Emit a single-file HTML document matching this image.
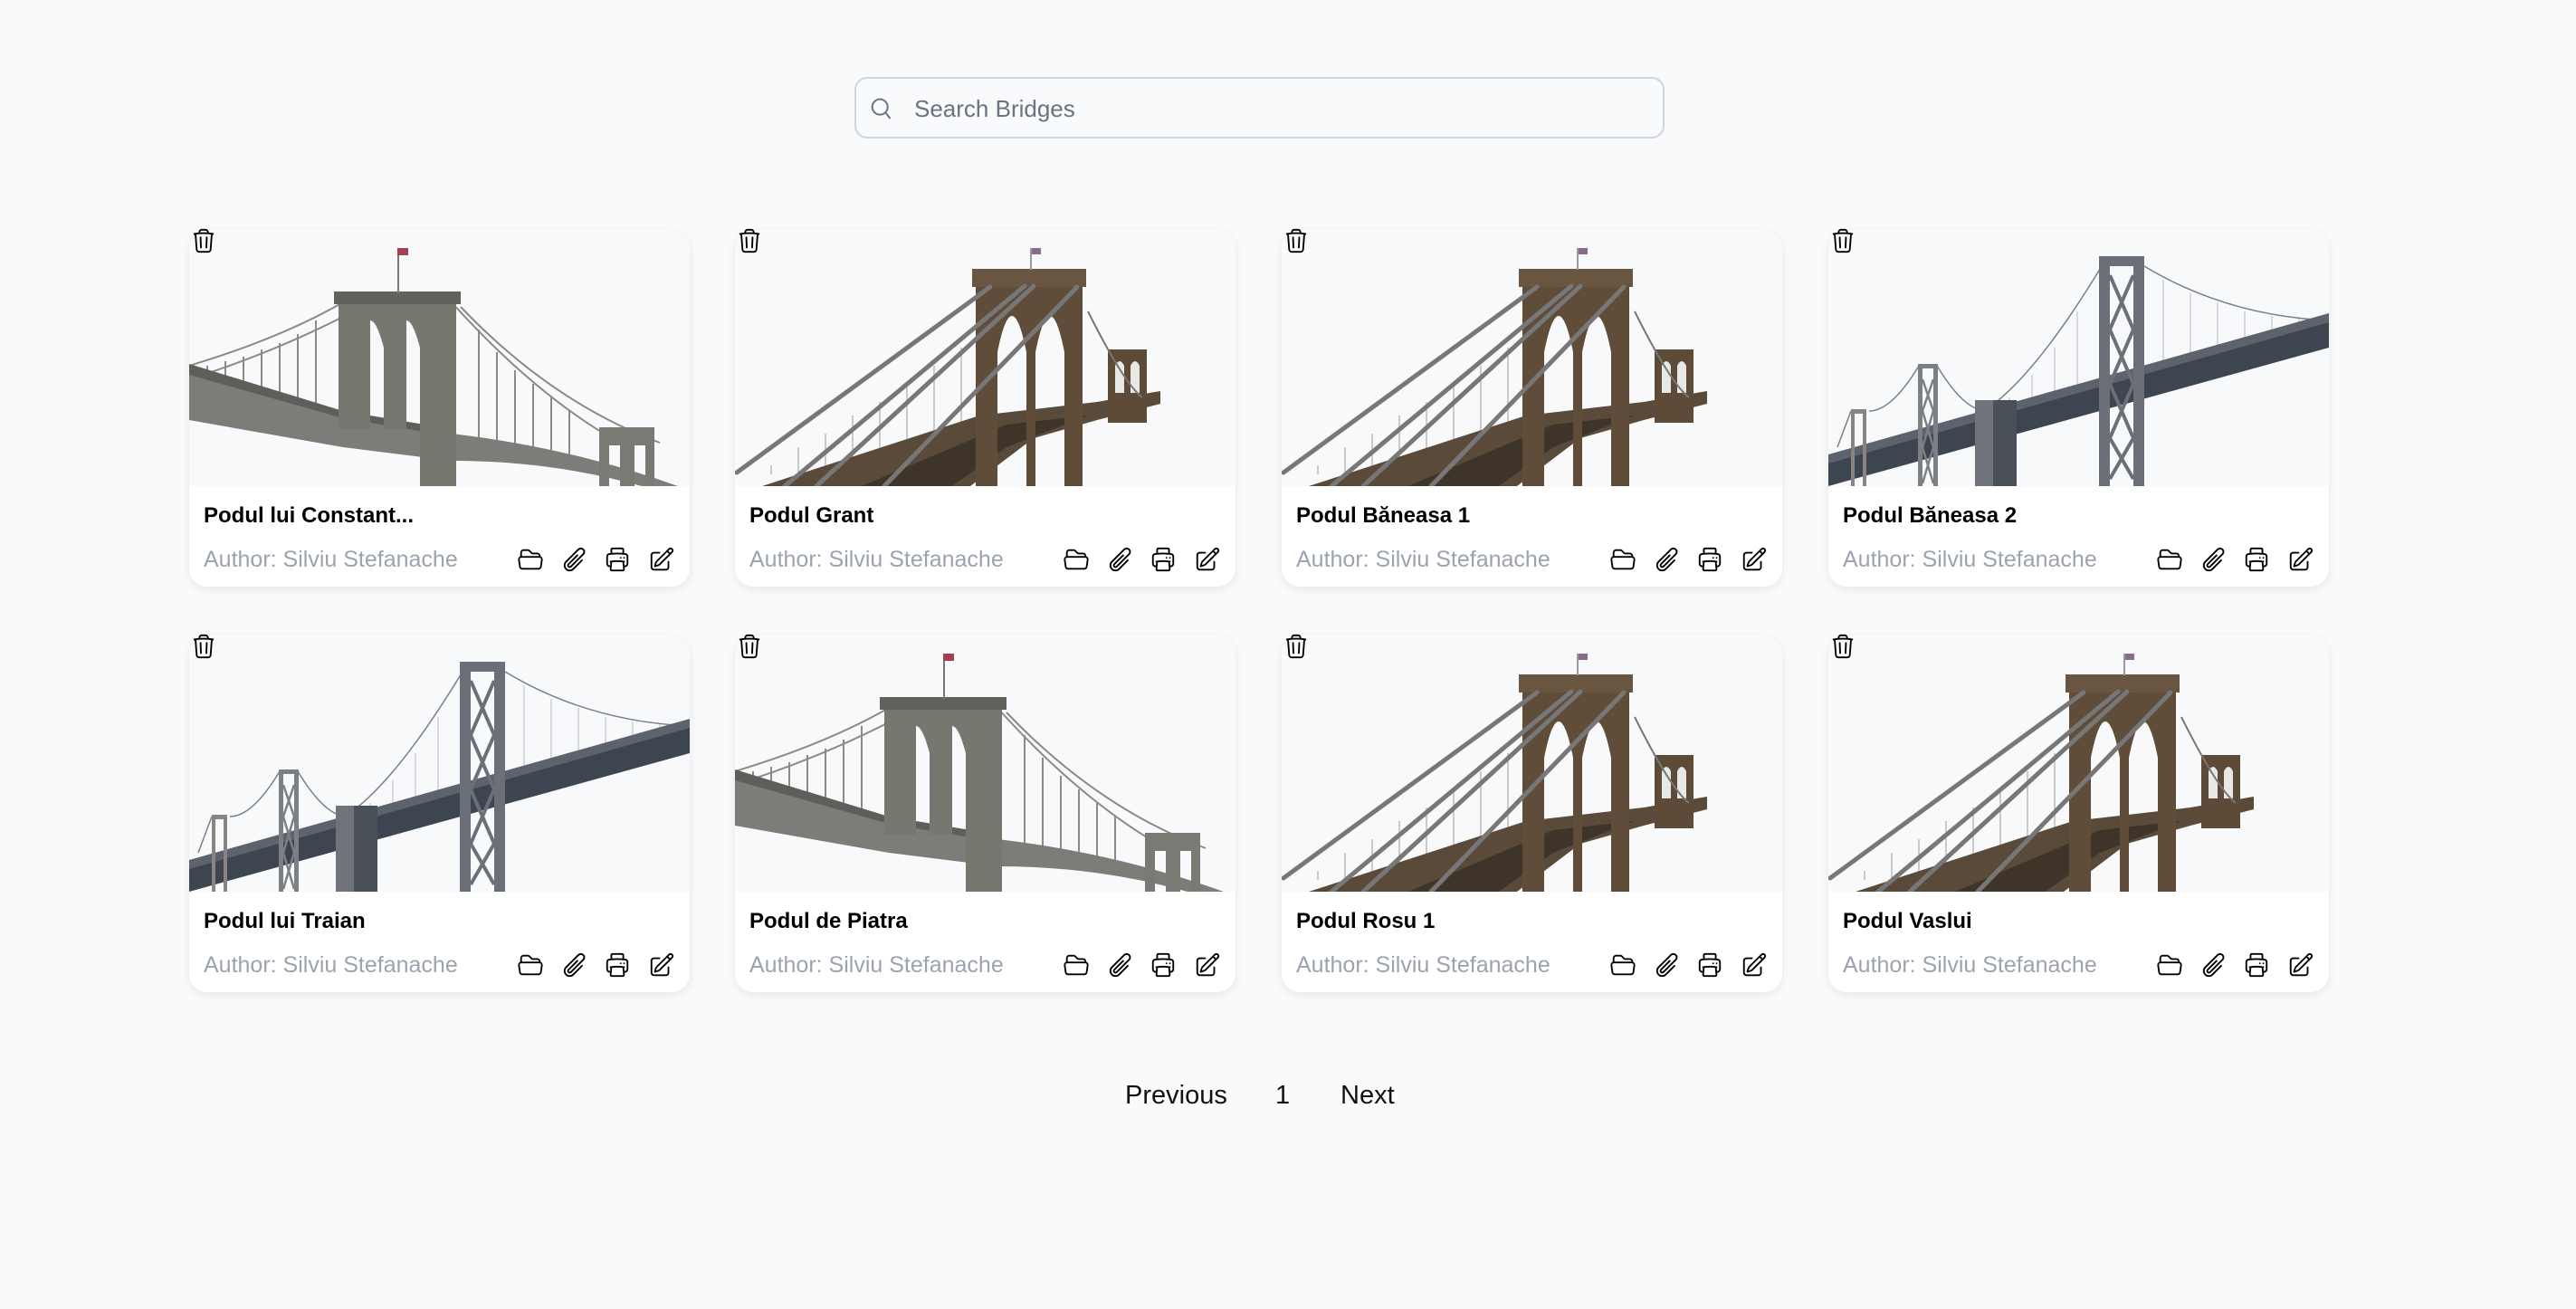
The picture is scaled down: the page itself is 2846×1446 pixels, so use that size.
<!DOCTYPE html>
<html><head><meta charset="utf-8"><style>
*{margin:0;padding:0;box-sizing:border-box}
body{width:2846px;height:1446px;background:#f9fafb;font-family:"Liberation Sans",sans-serif;position:relative;overflow:hidden}
.search{position:absolute;left:944px;top:85px;width:895px;height:68px;border:2px solid #d1d5db;border-radius:14px;background:#f9fafb}
.search span{position:absolute;left:64px;top:18px;font-size:26px;color:#6b7280}
.search svg{position:absolute;left:12px;top:17px}
.card{position:absolute;width:553px;height:394px;background:#fff;border-radius:20px;box-shadow:0 3px 10px rgba(0,0,0,.08)}
.card .img{position:absolute;left:0;top:0;width:553px;height:283px;border-radius:20px 20px 0 0;overflow:hidden;background:#f8f9fa}
.card .t{position:absolute;left:16px;top:302px;font-size:24px;font-weight:bold;color:#000}
.card .a{position:absolute;left:16px;top:350px;font-size:25px;color:#9ca3af}
.card .tr{position:absolute;left:1px;top:-3px}
.ic{position:absolute;top:349px}
.pg{position:absolute;top:1194px;font-size:29px;color:#111}
</style></head><body>
<svg width="0" height="0" style="position:absolute">
<defs>
<symbol id="trash" viewBox="0 0 24 24"><path fill="none" stroke="#000" stroke-width="1.5" stroke-linecap="round" stroke-linejoin="round" d="m14.74 9-.346 9m-4.788 0L9.26 9m9.968-3.21c.342.052.682.107 1.022.166m-1.022-.165L18.16 19.673a2.25 2.25 0 0 1-2.244 2.077H8.084a2.25 2.25 0 0 1-2.244-2.077L4.772 5.79m14.456 0a48.108 48.108 0 0 0-3.478-.397m-12 .562c.34-.059.68-.114 1.022-.165m0 0a48.11 48.11 0 0 1 3.478-.397m7.5 0v-.916c0-1.180-.91-2.164-2.09-2.201a51.964 51.964 0 0 0-3.32 0c-1.18.037-2.09 1.022-2.09 2.201v.916m7.5 0a48.667 48.667 0 0 0-7.5 0"/></symbol>
<symbol id="folder" viewBox="0 0 24 24"><path fill="none" stroke="#000" stroke-width="1.5" stroke-linecap="round" stroke-linejoin="round" d="M3.75 9.776c.112-.017.227-.026.344-.026h15.812c.117 0 .232.009.344.026m-16.5 0a2.25 2.25 0 0 0-1.883 2.542l.857 6a2.25 2.25 0 0 0 2.227 1.932H19.05a2.25 2.25 0 0 0 2.227-1.932l.857-6a2.25 2.25 0 0 0-1.883-2.542m-16.5 0V6A2.25 2.25 0 0 1 6 3.75h3.879a1.5 1.5 0 0 1 1.06.44l2.122 2.12a1.5 1.5 0 0 0 1.06.44H18A2.25 2.25 0 0 1 20.25 9v.776"/></symbol>
<symbol id="clip" viewBox="0 0 24 24"><path fill="none" stroke="#000" stroke-width="1.5" stroke-linecap="round" stroke-linejoin="round" d="m18.375 12.739-7.693 7.693a4.5 4.5 0 0 1-6.364-6.364l10.94-10.94A3 3 0 1 1 19.5 7.372L8.552 18.32m.009-.01-.01.01m5.699-9.941-7.81 7.81a1.5 1.5 0 0 0 2.112 2.13"/></symbol>
<symbol id="print" viewBox="0 0 24 24"><path fill="none" stroke="#000" stroke-width="1.5" stroke-linecap="round" stroke-linejoin="round" d="M6.72 13.829c-.24.03-.48.062-.72.096m.72-.096a42.415 42.415 0 0 1 10.56 0m-10.56 0L6.34 18m10.94-4.171c.24.03.48.062.72.096m-.72-.096L17.66 18m0 0 .229 2.523a1.125 1.125 0 0 1-1.12 1.227H7.231c-.662 0-1.18-.568-1.12-1.227L6.34 18m11.318 0h1.091A2.25 2.25 0 0 0 21 15.750V9.456c0-1.081-.768-2.015-1.837-2.175a48.055 48.055 0 0 0-1.913-.247M6.34 18H5.25A2.25 2.25 0 0 1 3 15.75V9.456c0-1.081.768-2.015 1.837-2.175a48.041 48.041 0 0 1 1.913-.247m10.5 0a48.536 48.536 0 0 0-10.5 0m10.5 0V3.375c0-.621-.504-1.125-1.125-1.125h-8.25c-.621 0-1.125.504-1.125 1.125v3.659M18 10.5h.008v.008H18V10.5Zm-3 0h.008v.008H15V10.5Z"/></symbol>
<symbol id="edit" viewBox="0 0 24 24"><path fill="none" stroke="#000" stroke-width="1.5" stroke-linecap="round" stroke-linejoin="round" d="m16.862 4.487 1.687-1.688a1.875 1.875 0 1 1 2.652 2.652L10.582 16.07a4.5 4.5 0 0 1-1.897 1.13L6 18l.8-2.685a4.5 4.5 0 0 1 1.13-1.897l8.932-8.931Zm0 0L19.5 7.125M18 14v4.75A2.25 2.25 0 0 1 15.75 21H5.25A2.25 2.25 0 0 1 3 18.75V8.25A2.25 2.25 0 0 1 5.25 6H10"/></symbol>

<symbol id="bw" viewBox="0 0 553 283" preserveAspectRatio="none">
<g stroke="#8a8a86" fill="none" stroke-width="2">
<path d="M0 150 Q100 120 170 80"/><path d="M0 165 Q110 130 200 80"/><path d="M290 80 Q380 180 470 232"/><path d="M300 85 Q400 190 520 235"/>
<path d="M20 150V200M40 145V205M60 140V205M80 132V210M100 125V212M120 115V215M140 100V218M320 110V240M340 135V245M360 155V250M380 170V255M400 185V258M420 200V262"/>
</g>
<path d="M0 150 L170 205 L290 225 Q420 240 540 283 L500 283 Q400 255 290 255 L170 240 L0 210Z" fill="#7c7c78"/>
<path d="M0 148 L170 200 L290 220 L290 228 L170 208 L0 160Z" fill="#5e5e5a"/>
<path d="M165 78h130v205h-40V130q-8-30-15-30v120h-25V130q-8-30-15-30v120h-35z" fill="#77776f"/>
<path d="M160 68h140v14H160z" fill="#62625d"/>
<path d="M230 20h2v50h-2z" fill="#777"/><path d="M230 20h12v8h-12z" fill="#a04050"/>
<path d="M453 218h61v65h-10v-45h-12v45h-16v-45h-12v45h-11z" fill="#7a7a75"/>
</symbol>

<symbol id="bc" viewBox="0 0 553 283" preserveAspectRatio="none">
<g stroke="#9a9a9a" fill="none" stroke-width="1">
<path d="M40 270V260M70 283V240M100 283V225M130 283V205M160 283V190M190 283V170M220 283V150M250 283V130"/>
</g>
<path d="M30 283 L270 205 L400 190 L470 178 L470 192 L400 210 L330 230 L260 283Z" fill="#5a4a3a"/>
<path d="M140 283 L300 215 L390 205 L300 240 L240 283Z" fill="#3e342a"/>
<path d="M266 55h118v228h-20V135q-8-40-16-40t-16 40v150h-10V135q-8-40-16-40t-16 40v150h-24z" fill="#5f4c39"/>
<path d="M262 43h126v20H262z" fill="#6a5540"/>
<path d="M326 20h2v24h-2z" fill="#999"/><path d="M328 20h10v7h-10z" fill="#8a6a8a"/>
<path d="M412 132h43v81h-43z" fill="#5d4a37"/>
<path d="M420 150q5-10 10 0v30h-10zM437 150q5-10 10 0v30h-10z" fill="#e8e8e6"/>
<g stroke="#777" fill="none" stroke-width="5" stroke-linecap="round">
<path d="M282 63 L2 268"/><path d="M320 62 L55 283"/><path d="M330 62 L90 283"/><path d="M378 63 L165 283"/>
</g>
<path d="M390 90 Q430 170 450 185" stroke="#777" stroke-width="2" fill="none"/>
</symbol>

<symbol id="bb" viewBox="0 0 553 283" preserveAspectRatio="none">
<g stroke="#7a7f86" fill="none" stroke-width="1.5">
<path d="M305 35 Q230 160 175 198"/><path d="M349 40 Q440 95 553 100"/>
<path d="M120 150 Q150 200 175 200"/><path d="M100 150 Q70 200 45 200"/><path d="M25 200 L10 240"/>
</g>
<g stroke="#aab" stroke-width=".8"><path d="M200 185V220M225 160V210M250 130V200M275 90V195M370 55V165M400 70V155M430 80V145M460 90V135M490 95V125M520 98V115"/></g>
<path d="M0 252 L553 94 L553 130 L0 283Z" fill="#3d4550"/>
<path d="M0 248 L553 92 L553 102 L0 258Z" fill="#5c636c"/>
<path d="M299 29h50v254h-12V40h-26v243h-12z" fill="#6b7078"/>
<path d="M311 50 L337 110 M337 50 L311 110 M311 110 L337 170 M337 110 L311 170 M311 170 L337 230 M337 170 L311 230 M311 230 L337 275 M337 230 L311 275" stroke="#6b7078" stroke-width="4"/>
<path d="M99 148h22v135h-5V153h-12v130h-5z" fill="#7c7f84"/>
<path d="M104 165 L116 200 M116 165 L104 200 M104 200 L116 240 M116 200 L104 240 M104 240 L116 280 M116 240 L104 280" stroke="#7c7f84" stroke-width="2.5"/>
<path d="M25 198h17v85h-4v-80h-9v80h-4z" fill="#8a8480"/>
<path d="M162 188h46v95h-46z" fill="#4a5058"/><path d="M162 188h20v95h-20z" fill="#70747a"/>
</symbol>
</defs></svg>

<div class="search"><svg width="34" height="34" viewBox="0 0 24 24"><circle cx="10" cy="10" r="6" fill="none" stroke="#6b7280" stroke-width="1.4"/><path d="M14.5 14.5 18 19" stroke="#6b7280" stroke-width="1.4"/></svg><span>Search Bridges</span></div>

<div class="card" style="left:209px;top:254px"><div class="img"><svg width="553" height="283"><use href="#bw"/></svg></div><svg class="tr" width="30" height="30"><use href="#trash"/></svg><div class="t">Podul lui Constant...</div><div class="a">Author: Silviu Stefanache</div><svg class="ic" style="left:362px" width="30" height="30"><use href="#folder"/></svg><svg class="ic" style="left:411px" width="30" height="30"><use href="#clip"/></svg><svg class="ic" style="left:458px" width="30" height="30"><use href="#print"/></svg><svg class="ic" style="left:507px" width="30" height="30"><use href="#edit"/></svg></div>

<div class="card" style="left:812px;top:254px"><div class="img"><svg width="553" height="283"><use href="#bc"/></svg></div><svg class="tr" width="30" height="30"><use href="#trash"/></svg><div class="t">Podul Grant</div><div class="a">Author: Silviu Stefanache</div><svg class="ic" style="left:362px" width="30" height="30"><use href="#folder"/></svg><svg class="ic" style="left:411px" width="30" height="30"><use href="#clip"/></svg><svg class="ic" style="left:458px" width="30" height="30"><use href="#print"/></svg><svg class="ic" style="left:507px" width="30" height="30"><use href="#edit"/></svg></div>

<div class="card" style="left:1416px;top:254px"><div class="img"><svg width="553" height="283"><use href="#bc"/></svg></div><svg class="tr" width="30" height="30"><use href="#trash"/></svg><div class="t">Podul Băneasa 1</div><div class="a">Author: Silviu Stefanache</div><svg class="ic" style="left:362px" width="30" height="30"><use href="#folder"/></svg><svg class="ic" style="left:411px" width="30" height="30"><use href="#clip"/></svg><svg class="ic" style="left:458px" width="30" height="30"><use href="#print"/></svg><svg class="ic" style="left:507px" width="30" height="30"><use href="#edit"/></svg></div>

<div class="card" style="left:2020px;top:254px"><div class="img"><svg width="553" height="283"><use href="#bb"/></svg></div><svg class="tr" width="30" height="30"><use href="#trash"/></svg><div class="t">Podul Băneasa 2</div><div class="a">Author: Silviu Stefanache</div><svg class="ic" style="left:362px" width="30" height="30"><use href="#folder"/></svg><svg class="ic" style="left:411px" width="30" height="30"><use href="#clip"/></svg><svg class="ic" style="left:458px" width="30" height="30"><use href="#print"/></svg><svg class="ic" style="left:507px" width="30" height="30"><use href="#edit"/></svg></div>

<div class="card" style="left:209px;top:702px"><div class="img"><svg width="553" height="283"><use href="#bb"/></svg></div><svg class="tr" width="30" height="30"><use href="#trash"/></svg><div class="t">Podul lui Traian</div><div class="a">Author: Silviu Stefanache</div><svg class="ic" style="left:362px" width="30" height="30"><use href="#folder"/></svg><svg class="ic" style="left:411px" width="30" height="30"><use href="#clip"/></svg><svg class="ic" style="left:458px" width="30" height="30"><use href="#print"/></svg><svg class="ic" style="left:507px" width="30" height="30"><use href="#edit"/></svg></div>

<div class="card" style="left:812px;top:702px"><div class="img"><svg width="553" height="283"><use href="#bw"/></svg></div><svg class="tr" width="30" height="30"><use href="#trash"/></svg><div class="t">Podul de Piatra</div><div class="a">Author: Silviu Stefanache</div><svg class="ic" style="left:362px" width="30" height="30"><use href="#folder"/></svg><svg class="ic" style="left:411px" width="30" height="30"><use href="#clip"/></svg><svg class="ic" style="left:458px" width="30" height="30"><use href="#print"/></svg><svg class="ic" style="left:507px" width="30" height="30"><use href="#edit"/></svg></div>

<div class="card" style="left:1416px;top:702px"><div class="img"><svg width="553" height="283"><use href="#bc"/></svg></div><svg class="tr" width="30" height="30"><use href="#trash"/></svg><div class="t">Podul Rosu 1</div><div class="a">Author: Silviu Stefanache</div><svg class="ic" style="left:362px" width="30" height="30"><use href="#folder"/></svg><svg class="ic" style="left:411px" width="30" height="30"><use href="#clip"/></svg><svg class="ic" style="left:458px" width="30" height="30"><use href="#print"/></svg><svg class="ic" style="left:507px" width="30" height="30"><use href="#edit"/></svg></div>

<div class="card" style="left:2020px;top:702px"><div class="img"><svg width="553" height="283"><use href="#bc"/></svg></div><svg class="tr" width="30" height="30"><use href="#trash"/></svg><div class="t">Podul Vaslui</div><div class="a">Author: Silviu Stefanache</div><svg class="ic" style="left:362px" width="30" height="30"><use href="#folder"/></svg><svg class="ic" style="left:411px" width="30" height="30"><use href="#clip"/></svg><svg class="ic" style="left:458px" width="30" height="30"><use href="#print"/></svg><svg class="ic" style="left:507px" width="30" height="30"><use href="#edit"/></svg></div>

<div class="pg" style="left:1243px">Previous</div>
<div class="pg" style="left:1409px">1</div>
<div class="pg" style="left:1481px">Next</div>
</body></html>
